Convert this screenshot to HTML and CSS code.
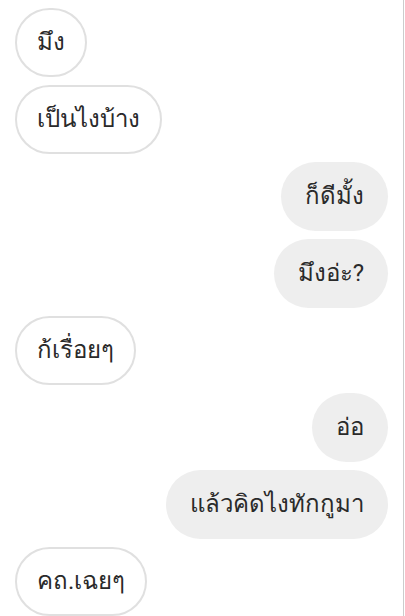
FILE: index.html
```html
<!DOCTYPE html>
<html lang="th">
<head>
    <meta charset="UTF-8">
    <meta name="viewport" content="width=device-width, initial-scale=1.0">
    <title>Chat</title>
    <link rel="stylesheet" href="styles.css">
</head>
<body>

<div class="chat">
    <!-- messages -->
    <div class="msg them"><span class="bubble">มึง</span></div>
    <div class="msg them"><span class="bubble">เป็นไงบ้าง</span></div>
    <div class="msg me"><span class="bubble">ก็ดีมั้ง</span></div>
    <div class="msg me"><span class="bubble">มึงอ่ะ?</span></div>
    <div class="msg them"><span class="bubble">ก้เรื่อยๆ</span></div>
    <div class="msg me"><span class="bubble">อ่อ</span></div>
    <div class="msg me"><span class="bubble">แล้วคิดไงทักกูมา</span></div>
    <div class="msg them"><span class="bubble">คถ.เฉยๆ</span></div>
</div>

</body>
</html>
```

FILE: styles.css
```css
body {
    margin: 0;
    padding: 0;
    background-color: #fff;
    font-family: Roboto, 'Noto Sans', sans-serif;
}

.chat {
    width: 373px;
    height: 616px;
    padding: 8px 15px 0 15px;
    border-right: 1px solid #ccc;
    box-sizing: content-box;
    display: flex;
    flex-direction: column;
    gap: 8px;
    overflow: hidden;
}

.msg {
    display: flex;
}

.msg.me {
    justify-content: flex-end;
}

.bubble {
    display: inline-block;
    font-size: 24px;
    line-height: 35px;
    padding: 17px 24px;
    border-radius: 35px;
    color: #2a2a2a;
    white-space: nowrap;
}

.them .bubble {
    background-color: #fff;
    border: 2px solid #e0e0e0;
    padding: 15px 20px;
}

.me .bubble {
    background-color: #eeeeee;
}
```
